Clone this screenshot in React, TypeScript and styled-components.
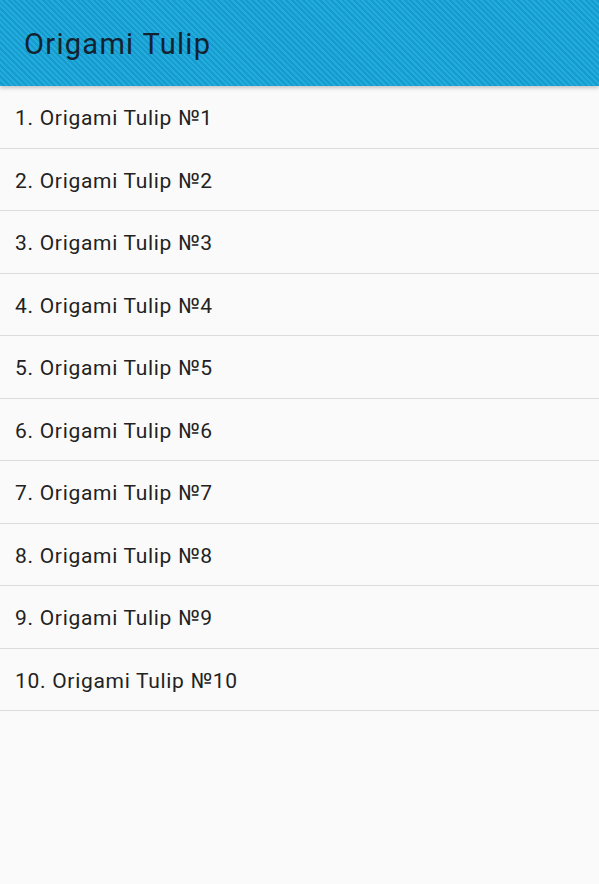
import React from "react";
import styled, { createGlobalStyle } from "styled-components";

const GlobalStyle = createGlobalStyle`
  html, body {
    margin: 0;
    padding: 0;
    background: #fafafa;
    font-family: Roboto, "Noto Sans", sans-serif;
  }
`;

const Page = styled.div`
  width: 599px;
  height: 884px;
  background: #fafafa;
  display: flex;
  flex-direction: column;
  overflow: hidden;
`;

const Toolbar = styled.header`
  position: relative;
  z-index: 1;
  height: 86px;
  display: flex;
  align-items: center;
  padding-left: 24px;
  background-color: #1ea7da;
  background-image: repeating-linear-gradient(
    45deg,
    #22abdd 0px,
    #22abdd 2px,
    #179bcd 2px,
    #179bcd 4px
  );
  box-shadow: 0 2px 4px rgba(0, 0, 0, 0.22);
`;

const Title = styled.h1`
  margin: 0;
  font-size: 29px;
  font-weight: 400;
  letter-spacing: 1.3px;
  color: #13222f;
  padding-top: 2px;
`;

const List = styled.ul`
  list-style: none;
  margin: 0;
  padding: 0;
`;

const Row = styled.li`
  box-sizing: border-box;
  height: 62.5px;
  display: flex;
  align-items: center;
  padding: 3px 0 0 15px;
  border-bottom: 1px solid #dcdcdc;
  font-size: 21px;
  letter-spacing: 0.7px;
  color: #222222;
`;

const App = () => {
  const items = Array.from({ length: 10 }, (_, i) => i + 1);

  return (
    <Page>
      <GlobalStyle />
      <Toolbar>
        <Title>Origami Tulip</Title>
      </Toolbar>
      <List>
        {items.map((n) => (
          <Row key={n}>
            {n}. Origami Tulip №{n}
          </Row>
        ))}
      </List>
    </Page>
  );
};

export default App;
